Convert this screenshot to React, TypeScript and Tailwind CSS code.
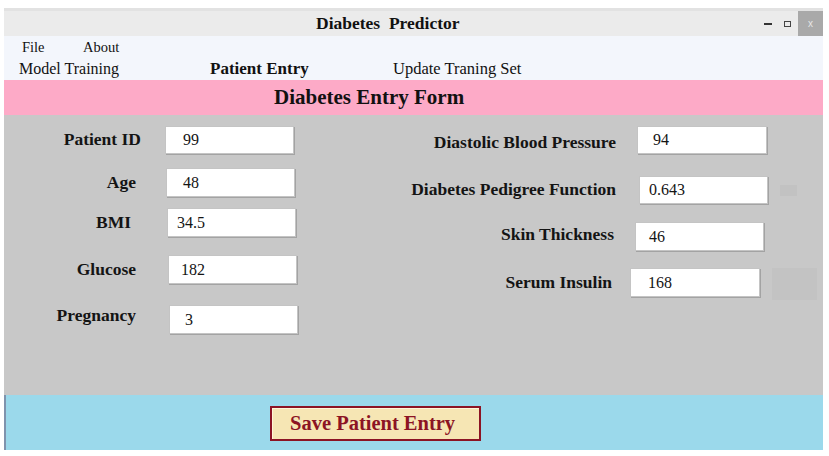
import React from "react";

const serif = "font-['Liberation_Serif','Times_New_Roman',serif]";

function Field({ value, className }: { value: string; className: string }) {
  return (
    <div
      className={`flex items-center bg-white border border-[#c4c4c4] shadow-[1px_1px_0_#a3a3a3] text-[16px] font-normal text-[#141414] ${className}`}
    >
      {value}
    </div>
  );
}

export default function App() {
  return (
    <div className={`w-[829px] h-[456px] bg-white pt-[8px] pl-[4px] pr-[6px] ${serif}`}>
      {/* Title bar */}
      <div className="flex items-center h-[28px] bg-[#ebebeb] border-t-[3px] border-[#e2e2e2]">
        <div className="ml-[312px] text-[17.5px] font-bold text-[#111]">Diabetes&nbsp; Predictor</div>
        <div className="ml-auto flex items-center h-full">
          <span className="w-[8px] h-[2px] bg-[#333] mr-[12px]" />
          <span className="w-[7px] h-[6px] border border-[#444] mr-[7px]" />
          <span className="flex items-center justify-center w-[25px] h-full bg-[#a9a9a9] text-[10px] text-[#e6e6e6] font-['Liberation_Sans',sans-serif]">
            x
          </span>
        </div>
      </div>

      {/* Menu */}
      <div className="h-[44px] bg-[#f3f6fc] text-[#111]">
        <div className="flex h-[22px] items-center pl-[18px] pt-[2px] text-[14.5px]">
          <span className="w-[61px]">File</span>
          <span>About</span>
        </div>
        <div className="flex h-[22px] items-center pl-[15px] text-[16px]">
          <span className="w-[191px]">Model Training</span>
          <span className="w-[183px] text-[17px] font-bold">Patient Entry</span>
          <span className="text-[16.5px]">Update Traning Set</span>
        </div>
      </div>

      {/* Header band */}
      <div className="flex items-center h-[35px] bg-[#fdaac7]">
        <div className="ml-[270px] text-[21px] font-bold text-[#111]">Diabetes Entry Form</div>
      </div>

      {/* Form */}
      <div className="flex h-[280px] bg-[#c8c8c8] text-[17.5px] leading-none font-bold text-[#141414]">
        <div className="w-[396px] flex flex-col">
          <div className="flex items-center h-[28px] mt-[11px]">
            <span className="w-[137px] text-right">Patient ID</span>
            <Field value="99" className="ml-[24px] w-[129px] h-[28px] pl-[17px]" />
          </div>
          <div className="flex items-center h-[29px] mt-[14px]">
            <span className="w-[132px] text-right">Age</span>
            <Field value="48" className="ml-[30px] w-[129px] h-[29px] pl-[16px]" />
          </div>
          <div className="flex items-center h-[29px] mt-[11px]">
            <span className="w-[127px] text-right">BMI</span>
            <Field value="34.5" className="ml-[36px] w-[129px] h-[29px] pl-[9px]" />
          </div>
          <div className="flex items-center h-[29px] mt-[18px]">
            <span className="w-[132px] text-right">Glucose</span>
            <Field value="182" className="ml-[32px] w-[129px] h-[29px] pl-[12px]" />
          </div>
          <div className="flex items-center h-[29px] mt-[21px]">
            <span className="w-[132px] text-right pb-[7px]">Pregnancy</span>
            <Field value="3" className="ml-[33px] w-[129px] h-[29px] pl-[15px]" />
          </div>
        </div>

        <div className="flex flex-col">
          <div className="flex items-center h-[28px] mt-[11px]">
            <span className="w-[216px] text-right pt-[6px]">Diastolic Blood Pressure</span>
            <Field value="94" className="ml-[21px] w-[130px] h-[28px] pl-[15px]" />
          </div>
          <div className="flex items-center h-[28px] mt-[22px]">
            <span className="w-[216px] text-right">Diabetes Pedigree Function</span>
            <Field value="0.643" className="ml-[23px] w-[129px] h-[28px] pl-[9px]" />
            <span className="ml-[12px] w-[17px] h-[11px] bg-[#c2c2c2]" />
          </div>
          <div className="flex items-center h-[29px] mt-[18px]">
            <span className="w-[214px] text-right pb-[4px]">Skin Thickness</span>
            <Field value="46" className="ml-[21px] w-[129px] h-[29px] pl-[13px]" />
          </div>
          <div className="flex items-start h-[29px] mt-[17px]">
            <span className="w-[212px] h-[29px] flex items-center justify-end">Serum Insulin</span>
            <Field value="168" className="ml-[18px] w-[130px] h-[29px] pl-[17px]" />
            <span className="ml-[12px] w-[45px] h-[32px] bg-[#c3c3c3]" />
          </div>
        </div>
      </div>

      {/* Footer */}
      <div className="flex h-[55px] bg-[#9bd9eb] border-l-[2px] border-[#7f93ad]">
        <button
          className="mt-[11px] ml-[264px] w-[211px] h-[35px] flex items-center pl-[18px] bg-[#f6e6b4] border-2 border-[#8c1424] shadow-[inset_1px_1px_0_#fff6d8] text-[20.5px] font-bold text-[#8c1424]"
        >
          Save Patient Entry
        </button>
      </div>
    </div>
  );
}
